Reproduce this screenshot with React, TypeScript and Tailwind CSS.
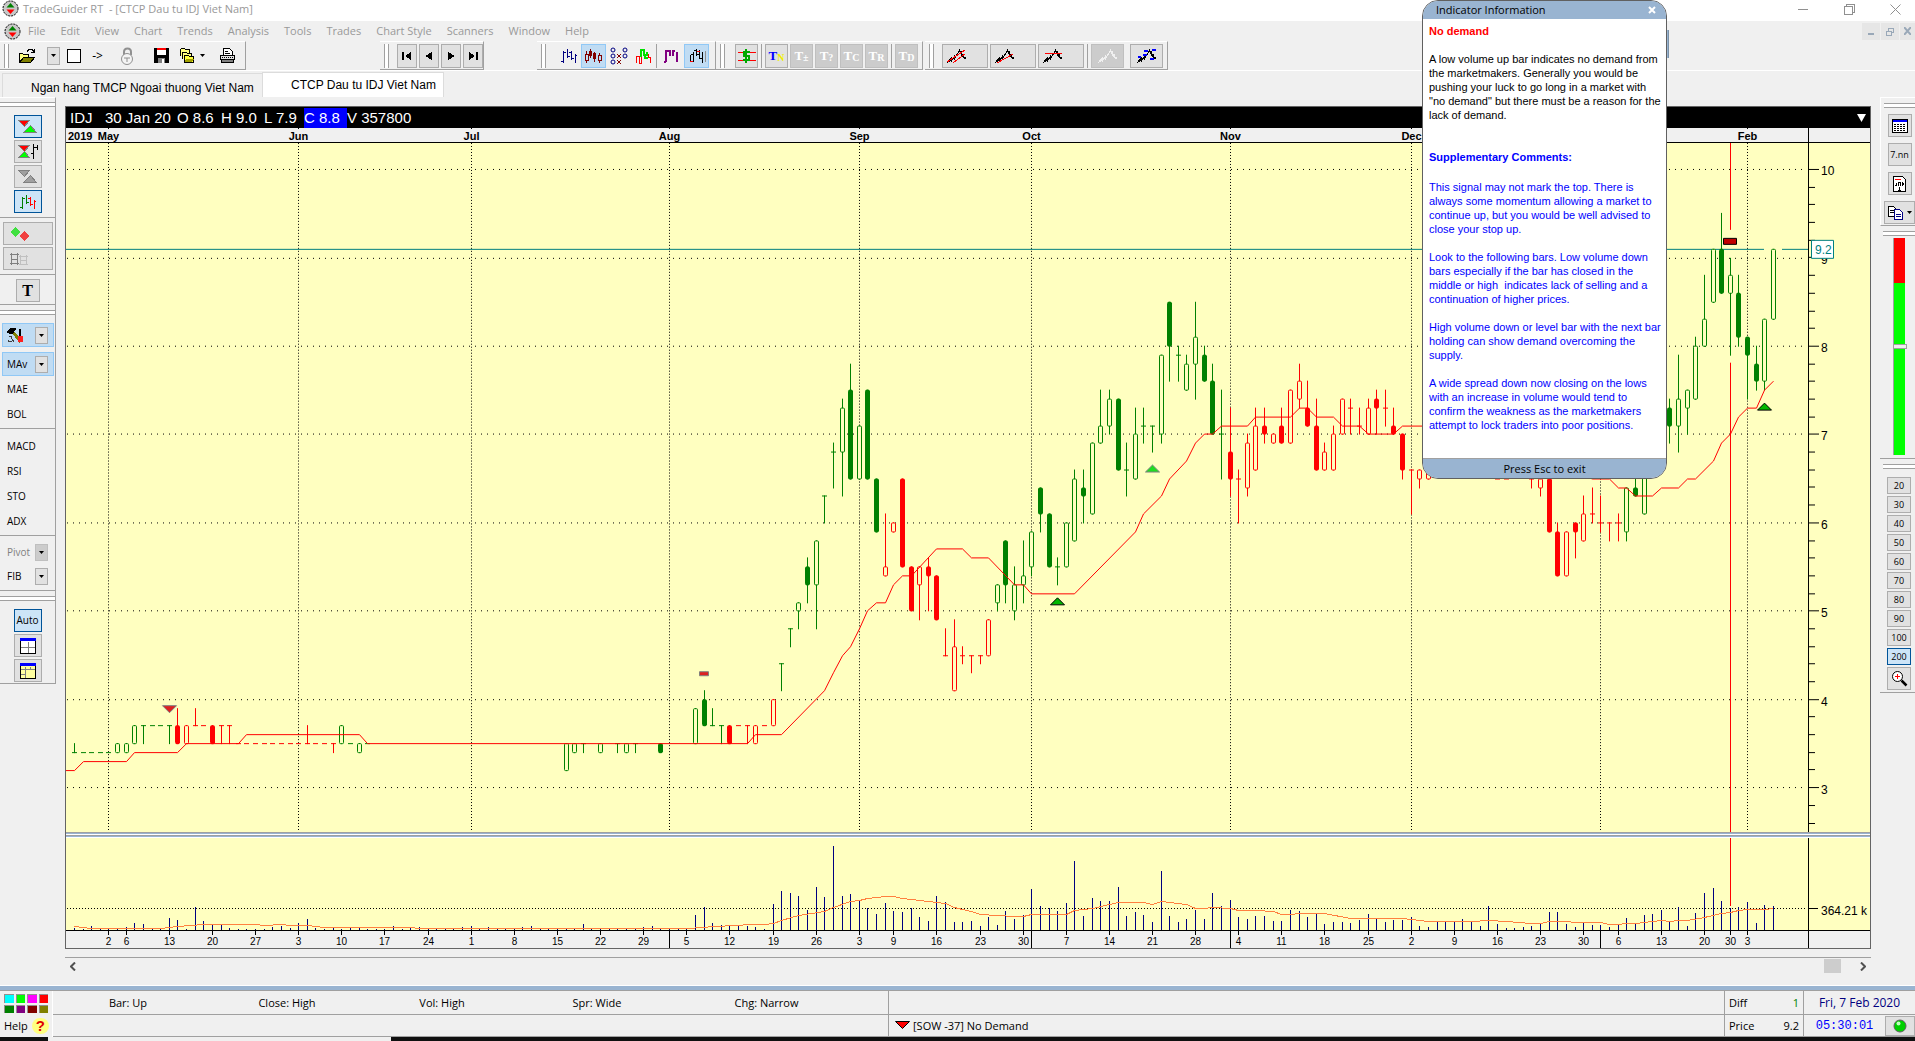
import React from 'react';

type Body = 'hollow' | 'solid' | 'tick';
type Bar = [index: number, tone: 'g' | 'r', body: Body, top: number, bottom: number, high: number, low: number];

const GREEN = '#008000';
const RED = '#ff0000';
const PAPER = '#ffffc0';

// Compact bar notation: index, colour + body (h = hollow, s = solid, t = tick), top, bottom, high, low
const BARS: Bar[] = `
0gt34,34,35,34 1gt34 2gt34 3gt34 4gt34 5gh35,34 6gh35,34 7gh37,35 8gt37,37,37,35 9gt37 10gt37
11gt37,37,37,35 12rs37,35,39,35 13rh37,35 14rt37,37,39,37 15rt37 16rs37,35 17rt37,37,37,35
18rt37,37,37,35 19rt35 20rt35 21rt35 22rt35 23rt35 24rt35 25rt35 26rt35 27rt35,35,37,35 28rt35 29rt35
30rt35,35,35,34 31gh37,35 32gt35 33gh35,34 34gt35 57gh35,32 58gh35,34 59gt35,35,35,34 61gh35,34
63gt35,35,35,34 64gh35,34 65gt35,35,35,34 68gs35,34 72gh39,35 73gs40,37,41,37 74gt37,37,39,37
75gt37,37,37,35 76rs37,35 77rt37 78rt37,37,37,35 79rh37,35 80rt37 81rh40,37 82gt44,44,44,41
83gt48,48,48,46 84gh51,50,51,48 85gs55,53,56,51 86gh58,53,58,48 87gt63,63,63,60 88gt68,68,69,64
89gh73,68,74,63 90gs75,65,78,65 91gh71,65 92gs75,65 93gs65,59 94rh55,54,61,54 95rh60,59 96rs65,55
97rs55,50 98rh55,53,55,49 99rs55,54,56,50 100rs54,49 101rt45,45,48,45 102rh46,41,49,41
103rt45,45,46,44 104rt45,45,45,43 105rt45,45,45,44 106rh49,45 107gh53,51,53,50 108gs58,53,58,51
109gh53,50,55,49 110gh54,53,58,51 111gh59,55,59,54 112gs64,61,64,59 113gs61,55 114gt55,55,56,53
115gh60,55 116gh65,58,66,58 117gs64,63,66,60 118gh69,61 119gh71,69,75,69 120gh74,71,75,70
121gs74,66 122gt66,66,69,63 123gh70,65,73,65 124gt71,71,73,69 125gt71,71,71,68 126gh79,70,79,69
127gs85,80,85,76 128gt79,79,80,76 129gh78,75,79,75 130gh81,78,85,74 131gs79,76,80,76 132gs76,70,78,70
133gt70,70,75,65 134rs68,65,73,63 135rt65,65,66,60 136rh69,64,70,63 137rh71,66,73,66 138rs71,70,73,69
139rh70,69 140rs71,69,73,69 141rh75,69 142rh76,74,78,73 143rs73,71,76,71 144rs71,66,74,66
145rh68,66,69,66 146rh70,66,71,66 147rh74,70 148rt73,73,74,70 149rt71,71,73,70 150rh73,70,74,70
151rs74,73,75,70 152rt73,73,75,71 153rs71,70,73,70 154rs70,66,70,65 155rt66,66,66,61 156rh66,65,66,64
157rh66,65 165rt65 166rt65 169rt65,65,65,64 170rh65,64,65,63 171rs65,59 172rs59,54,60,54 173rh59,54
174rs60,59,60,56 175rh61,58,63,58 176rt61,61,64,60 177rt60,60,63,59 178rt60,60,60,58 179rt60,60,61,58
180gh64,59,64,58 181gs64,63,66,63 182gh67,61 185gs73,71,74,69 186gh74,71,79,68 187gh75,73,75,70
188gh80,74,81,74 189gh83,80,88,80 190gh91,85 191gs91,86,95,86 192gh88,86,90,79 193gs86,81,88,80
194gs81,79,81,74 195gs78,76,80,75 196gh83,76,83,75 197gh91,83`
  .trim()
  .split(/\s+/)
  .map((item) => {
    const [, index, tone, body, rest] = item.match(/^(\d+)([gr])([hst])(.+)$/)!;
    const p = rest.split(',').map((n) => Number(n) / 10);
    const top = p[0];
    const bottom = p[1] ?? top;
    return [
      Number(index),
      tone as 'g' | 'r',
      body === 'h' ? 'hollow' : body === 's' ? 'solid' : 'tick',
      top,
      bottom,
      p[2] ?? top,
      p[3] ?? bottom,
    ];
  });

const MOVING_AVERAGE: [number, number][] = [
  [-1, 3.2], [0, 3.2], [1, 3.3], [6, 3.3], [7, 3.4], [12, 3.4], [13, 3.5], [19, 3.5], [20, 3.6], [33, 3.6],
  [34, 3.5], [78, 3.5], [79, 3.6], [82, 3.6], [87, 4.1], [88, 4.3], [89, 4.5], [90, 4.6], [91, 4.8], [92, 5],
  [93, 5.1], [94, 5.1], [95, 5.3], [96, 5.4], [97, 5.4], [100, 5.7], [103, 5.7], [104, 5.6], [106, 5.6],
  [109, 5.3], [110, 5.3], [111, 5.2], [116, 5.2], [123, 5.9], [124, 6.1], [126, 6.3], [127, 6.5], [129, 6.7],
  [130, 6.9], [131, 7], [132, 7], [133, 7.1], [136, 7.1], [137, 7.2], [141, 7.2], [142, 7.3], [143, 7.3],
  [144, 7.2], [146, 7.2], [147, 7.1], [149, 7.1], [150, 7], [153, 7], [154, 7.1], [158, 7.1], [170, 6.7],
  [176, 6.5], [178, 6.5], [179, 6.4], [180, 6.4], [181, 6.3], [183, 6.3], [184, 6.4], [186, 6.4], [187, 6.5],
  [188, 6.5], [190, 6.7], [191, 6.9], [192, 7], [193, 7.2], [194, 7.3], [195, 7.3], [196, 7.5], [197, 7.6],
];

const VOLUME = [
  2, 1, 4, 1, 1, 2, 3, 7, 6, 2, 1, 12, 10, 1, 23, 9, 6, 6, 2, 1, 1, 1, 1, 3, 4, 2, 7, 11, 2, 1, 2, 1, 2, 2, 1, 1,
  1, 4, 1, 2, 3, 1, 2, 1, 1, 3, 4, 1, 3, 1, 2, 2, 3, 4, 1, 2, 1, 1, 1, 6, 1, 1, 1, 2, 1, 1, 3, 4, 2, 1, 1, 1,
  15, 23, 7, 5, 5, 5, 4, 3, 1, 26, 39, 37, 34, 20, 43, 33, 84, 34, 36, 30, 22, 16, 27, 19, 18, 22, 13, 9, 34,
  28, 8, 8, 9, 4, 13, 5, 19, 11, 15, 41, 24, 22, 19, 27, 69, 14, 32, 29, 29, 43, 14, 18, 15, 8, 59, 14, 8, 11,
  20, 11, 37, 24, 30, 13, 11, 14, 14, 9, 9, 20, 19, 13, 16, 6, 8, 8, 7, 10, 16, 11, 8, 10, 10, 13, 4, 3, 9, 9,
  8, 11, 8, 4, 24, 6, 2, 2, 3, 4, 6, 18, 18, 6, 3, 8, 5, 5, 3, 6, 12, 6, 15, 16, 20, 8, 23, 4, 17, 37, 42, 29,
  22, 23, 28, 7, 25, 24,
];

const VOLUME_AVERAGE: [number, number][] = [
  [0, 4], [2, 2], [10, 2], [12, 4], [15, 6], [21, 6], [22, 5], [24, 6], [25, 5], [27, 5], [29, 3], [39, 3],
  [40, 2], [71, 2], [73, 3], [74, 4], [77, 5], [78, 6], [80, 6], [81, 7], [82, 10], [84, 15], [87, 19],
  [88, 23], [90, 29], [91, 30], [92, 32], [94, 34], [95, 34], [96, 32], [99, 29], [101, 27], [102, 23],
  [103, 21], [104, 19], [105, 16], [107, 15], [109, 14], [110, 14], [111, 16], [115, 16], [116, 20],
  [118, 22], [120, 26], [121, 28], [124, 28], [125, 26], [126, 29], [129, 26], [130, 22], [131, 22],
  [132, 23], [134, 22], [135, 20], [137, 20], [139, 19], [140, 16], [141, 16], [142, 17], [145, 17],
  [148, 12], [154, 12], [155, 11], [157, 9], [162, 9], [164, 10], [166, 9], [169, 7], [170, 7], [171, 9],
  [173, 9], [174, 8], [177, 8], [178, 6], [179, 6], [180, 7], [181, 7], [184, 10], [185, 9], [186, 10],
  [187, 10], [189, 13], [191, 17], [192, 18], [193, 20], [194, 21], [196, 21], [197, 22],
];

const MONTHS: [number, string][] = [
  [4, 'May'], [26, 'Jun'], [46, 'Jul'], [69, 'Aug'], [91, 'Sep'], [111, 'Oct'], [134, 'Nov'], [155, 'Dec'],
  [177, ''], [194, 'Feb'],
];

const DAYS: [number, string][] = [
  [4, '2'], [6, '6'], [11, '13'], [16, '20'], [21, '27'], [26, '3'], [31, '10'], [36, '17'], [41, '24'],
  [46, '1'], [51, '8'], [56, '15'], [61, '22'], [66, '29'], [71, '5'], [76, '12'], [81, '19'], [86, '26'],
  [91, '3'], [95, '9'], [100, '16'], [105, '23'], [110, '30'], [115, '7'], [120, '14'], [125, '21'],
  [130, '28'], [135, '4'], [140, '11'], [145, '18'], [150, '25'], [155, '2'], [160, '9'], [165, '16'],
  [170, '23'], [175, '30'], [179, '6'], [184, '13'], [189, '20'], [192, '30'], [194, '3'],
];

const px = (i: number) => Math.round(8 + 8.624 * i) + 0.5;
const py = (price: number) => Math.floor(203.5 + (8 - price) * 88.45) + 0.5;

const Candle: React.FC<{ bar: Bar }> = ({ bar }) => {
  const [i, tone, body, top, bottom, high, low] = bar;
  const x = px(i);
  const color = tone === 'g' ? GREEN : RED;
  return (
    <g stroke={color} fill={body === 'solid' ? color : PAPER}>
      {high !== low && <path d={`M${x} ${py(high) - 0.5}V${py(low) + 0.5}`} />}
      {body === 'tick' ? (
        <path d={`M${x - 2.5} ${py(top)}h5`} />
      ) : (
        <rect x={x - 2} y={py(top)} width="4" height={py(bottom) - py(top)} rx="1" />
      )}
    </g>
  );
};

const MonthHeader: React.FC = () => (
  <svg
    viewBox="0 0 1804 15"
    preserveAspectRatio="none"
    className="block h-[15px] w-full bg-[#f0f0f0] font-['Liberation_Sans',sans-serif] text-[11px] font-bold"
  >
    <text x="2" y="12">2019</text>
    {MONTHS.map(([i, name]) => (
      <g key={i}>
        <text x={px(i)} y="12" textAnchor="middle">{name}</text>
        <path d={`M${px(i)} 0v1`} stroke="#000" />
      </g>
    ))}
    <path d="M0 14.5H1804M1742.5 0V15" stroke="#000" shapeRendering="crispEdges" />
  </svg>
);

const PriceChart: React.FC = () => (
  <svg
    viewBox="0 0 1804 690"
    preserveAspectRatio="none"
    className="block min-h-0 w-full flex-1 bg-[#ffffc0] font-['Liberation_Sans',sans-serif] text-[12px]"
  >
    <g shapeRendering="crispEdges" fill="none">
      {[10, 9, 8, 7, 6, 5, 4, 3].map((p) => (
        <path key={p} d={`M1 ${py(p)}H1738`} stroke="#000" strokeDasharray="1 5" />
      ))}
      {MONTHS.map(([i]) => (
        <path key={i} d={`M${px(i)} 0V690`} stroke="#000" strokeDasharray="1 2" />
      ))}
      <path d={`M0 ${py(9.1)}H1698M1716 ${py(9.1)}H1742`} stroke="#008080" />
      <path d="M1664.5 0V87M1664.5 220V690" stroke={RED} />
      {BARS.map((bar) => (
        <Candle key={bar[0]} bar={bar} />
      ))}
      <polyline points={MOVING_AVERAGE.map(([i, p]) => `${px(i)},${py(p)}`).join(' ')} stroke={RED} />
      <path d="M1742.5 0V690" stroke="#000" />
      {Array.from({ length: 39 }, (_, k) => 10 - k * 0.2).map((p, k) => (
        <path key={k} d={`M1743 ${py(p + 0.001)}h${k % 5 === 0 ? 10 : 6}`} stroke="#000" />
      ))}
    </g>
    {/* Signal markers */}
    <path d="M96.5 563.5h14l-7 7z" fill="#dd2020" stroke="#808080" />
    <path d="M633.5 529.5h9v4h-9z" fill="#dd2020" stroke="#808080" />
    <path d="M984.5 462.5h14l-7-7z" fill="#00b800" stroke="#000" />
    <path d="M1079.5 329.5h14l-7-7z" fill="#20dd20" stroke="#808080" />
    <path d="M1657.5 95.5h13v6h-13z" fill="#c00000" stroke="#000" />
    <path d="M1691.5 267.5h14l-7-7z" fill="#00b800" stroke="#000" />
    {[10, 9, 8, 7, 6, 5, 4, 3].map((p) => (
      <text key={p} x="1755" y={py(p) + 6}>{p}</text>
    ))}
    <path d="M1745.5 97.5h22v18h-22z" fill="#fff" stroke="#008080" />
    <text x="1749" y="111" fill="#008080">9.2</text>
  </svg>
);

const VolumeChart: React.FC = () => (
  <svg
    viewBox="0 0 1804 110"
    preserveAspectRatio="none"
    className="block h-[110px] w-full bg-[#f0f0f0] font-['Liberation_Sans',sans-serif] text-[10px]"
  >
    <path d="M0 0H1804V92H0z" fill={PAPER} />
    <g shapeRendering="crispEdges" fill="none">
      <path d="M1 70.5H1740" stroke="#000" strokeDasharray="1 2" />
      {VOLUME.map((v, i) => (
        <path key={i} d={`M${px(i)} ${92 - v}V92`} stroke="#000080" />
      ))}
      <polyline points={VOLUME_AVERAGE.map(([i, v]) => `${px(i)},${92.5 - v}`).join(' ')} stroke="#ff8040" />
      <path d="M1664.5 0V68" stroke={RED} />
      <path d="M0 92.5H1804M1742.5 0V110M1743 70.5h9" stroke="#000" />
      {DAYS.map(([i]) => (
        <path key={i} d={`M${px(i)} 93v4`} stroke="#000" />
      ))}
      {[69, 111, 134, 177].map((i) => (
        <path key={i} d={`M${px(i)} 93v17`} stroke="#000" />
      ))}
    </g>
    {DAYS.map(([i, label]) => (
      <text key={i} x={px(i)} y="107" textAnchor="middle">{label}</text>
    ))}
    <text x="1755" y="77" className="text-[12px]">364.21 k</text>
  </svg>
);

/* ---------- small drawings ---------- */

const Pic: React.FC<{ w?: number; h?: number; children: React.ReactNode }> = ({ w = 18, h = 18, children }) => (
  <svg width={w} height={h} viewBox={`0 0 ${w} ${h}`} fill="none" stroke="#000" shapeRendering="crispEdges" className="shrink-0">
    {children}
  </svg>
);

const AppMark: React.FC = () => (
  <svg width="17" height="17" viewBox="0 0 17 17" className="shrink-0">
    <circle cx="8.5" cy="8.5" r="7.5" fill="#c8c8c8" stroke="#000" strokeDasharray="2 1" />
    <path d="M8.5 3l4 4.5h-8z" fill="#008000" />
    <path d="M8.5 14l4-4.5h-8z" fill="#ff0000" />
  </svg>
);

const Caret: React.FC = () => (
  <svg width="5" height="3" viewBox="0 0 5 3" className="shrink-0"><path d="M0 0h5L2.5 3z" /></svg>
);

const OpenPic = () => (
  <Pic w={18} h={16}>
    <path d="M1.5 14V5.5h3l1 1h5v3" fill="#ffff80" />
    <path d="M1.5 14.5l4-5h11l-4 5z" fill="#808000" />
    <path d="M9 3.5l2-2h3l2 2M16.5 1v4M13 4.5h3" />
  </Pic>
);
const LockPic = () => (
  <svg width="14" height="18" viewBox="0 0 14 18" fill="none" stroke="#909090">
    <path d="M4 8V5q0-3.500 3.500-3.500T11 5v3" strokeWidth="2" />
    <circle cx="7" cy="12" r="5.5" fill="#f4f4f4" />
    <path d="M4 11h6M7 11v4" />
  </svg>
);
const SavePic = () => (
  <Pic w={15} h={15}>
    <path d="M0 0h14l1 1v14H0z" fill="#000" stroke="none" />
    <path d="M3 1h9v6H3z" fill="#fff" stroke="none" />
    <path d="M3 0h9v2H3z" fill="#ff0000" stroke="none" />
    <path d="M4 10h7v5H4z" fill="#808080" stroke="none" />
    <path d="M8 11h2v4H8z" fill="#fff" stroke="none" />
  </Pic>
);
const FoldersPic = () => (
  <Pic w={17} h={17}>
    <path d="M1.5 9V2.5l1-1h3l1 1h4V8" fill="#ffff80" />
    <path d="M3.5 12V5.5h4l1 1h4v4" fill="#ffff80" />
    <path d="M5.5 15.5V8.5h4l1 1h4v6z" fill="#ffff40" />
    <path d="M7 12h8l-2 3H6z" fill="#a0a000" stroke="none" />
  </Pic>
);
const PrintPic = () => (
  <Pic w={17} h={17}>
    <path d="M4.5 8V1.5h6l3 3V8z" fill="#fff" />
    <path d="M6 4.5h3M6 6.5h5" />
    <path d="M1.5 8.5h14v4h-14z" fill="#e0e0e0" />
    <path d="M1 10.5h15" strokeDasharray="1 1" />
    <path d="M2.5 12.5h12v3h-12z" fill="#808080" />
  </Pic>
);
const BarsPic: React.FC<{ a: string; b?: string }> = ({ a, b = a }) => (
  <Pic w={16} h={16}>
    <path d="M2.5 3v12M0 13.5h2M3 4.5h2M6.5 1v9M7 8.5h2" stroke={a} />
    <path d="M10.5 3v9M8 4.5h2M11 10.5h2M14.5 6v9M15 7.5h1" stroke={b} />
  </Pic>
);
const CandlesPic = () => (
  <Pic w={17} h={16}>
    <path d="M1.5 3v3M1.5 12v3M.5 6.5h3v6h-3zM5.5 1v9M9.5 4v10M14.5 5v2M14.5 12v3M13.5 7.5h3v5h-3z" stroke="#800000" />
    <path d="M4 3h3v5H4zM8 5h3v6H8z" fill="#800000" stroke="none" />
  </Pic>
);
const PointFigurePic = () => (
  <svg width="18" height="18" viewBox="0 0 18 18" fill="none">
    <g stroke="#000080">
      <circle cx="3" cy="3" r="2" /><circle cx="3" cy="9" r="2" /><circle cx="3" cy="15" r="2" />
      <circle cx="15" cy="3" r="2" /><circle cx="15" cy="9" r="2" />
    </g>
    <path d="M7 7l4 4m0-4l-4 4M7 13l4 4m0-4l-4 4" stroke="#800000" />
  </svg>
);
const SwingPic = () => (
  <Pic w={18} h={16}>
    <path d="M1.5 15V8.5h3V15h2V9M13.5 6v3.500h2V15" stroke="#ff0000" />
    <path d="M6 9V2h3v5h3V4M10 6v4h3" stroke="#00e000" strokeWidth="2" />
  </Pic>
);
const PurplePic = () => (
  <Pic w={15} h={16}>
    <path d="M2 2v12M6 2v6M9 2v6M13 4v10M2 3h3M9 3h2M0 14h2" stroke="#800080" strokeWidth="2" />
  </Pic>
);
const StepsPic = () => (
  <Pic w={18} h={16}>
    <path d="M2.5 7v7M5.5 4v10M8.5 1v7M11.5 2v9M14.5 4v11M3 6.5h2M6 2.5h2M9 6.5h2M12 10.5h2" />
    <path d="M17.5 3v11" stroke="#909090" />
    <path d="M9 3.5h3M2 13.5h3" stroke="#ff0000" />
  </Pic>
);
const TrendPic: React.FC<{ red?: string; blue?: boolean; tone?: string }> = ({ red, blue, tone = '#000' }) => (
  <Pic w={20} h={16}>
    <path d="M.5 15l2-4v3l2-5v4l3-5v3l5-9 2 5 1 1 3 3" stroke={tone} />
    <path d="M12 3h2v3h2v3h2v2" stroke={tone} />
    {red && <path d={red} stroke="#ff0000" />}
    {blue && <path d="M7 3h4M15 2h4M6 7h4M1 9h3M13 11h4" stroke="#0000ff" strokeWidth="2" />}
  </Pic>
);

const SignalsPic: React.FC<{ up: string; down: string; flag?: boolean }> = ({ up, down, flag }) => (
  <Pic w={22} h={15}>
    <path d="M1.5 1.5h11l-5 6z" fill={down} stroke="#808080" />
    <path d={flag ? 'M1.5 13.5h11l-5-6z' : 'M6.5 13.5h13l-6-7z'} fill={up} stroke="#808080" />
    {flag && <path d="M16.5 0v15M17 3.5h3M20.5 1v5M14 9.5h2" />}
  </Pic>
);
const GridPic: React.FC<{ fill: string; uneven?: boolean }> = ({ fill, uneven }) => (
  <Pic w={16} h={16}>
    <path d="M.5 1.5h15v14H.5z" fill={fill} />
    <path d={uneven ? 'M1 6.5h14M5.5 4v11M10.5 4v3M1 11.5h4' : 'M1 9.5h14M8.5 4v11'} stroke="#808080" />
    <path d="M0 1.5h16" stroke="#0000ff" strokeWidth="3" />
  </Pic>
);
const HammerPic = () => (
  <Pic w={18} h={17}>
    <path d="M5 4l9 11" stroke="#808000" strokeWidth="3" />
    <path d="M0 5l4-4h5L5 7z" fill="#000" />
    <path d="M13 2v7" strokeWidth="2" />
    <path d="M11 9h5v6h-5z" fill="#ff2020" stroke="none" />
    <path d="M1.5 9.5h3v2l3 4M1.5 12.5v2h3" stroke="#404040" />
  </Pic>
);

/* ---------- controls ---------- */

const Btn: React.FC<{ label: string; className?: string; children?: React.ReactNode }> = ({
  label,
  className = '',
  children,
}) => (
  <button type="button" aria-label={label} className={`flex shrink-0 items-center ${className}`}>
    {children}
  </button>
);

const raised = 'border border-[#adadad] bg-[#e1e1e1]';
const pressed = 'border border-[#005499] bg-[#cce4f7]';
const glowing = 'border border-[#90c8f6] bg-[#c0dcf3]';
const muted = 'border border-[#bfbfbf] bg-[#cccccc]';

const Band: React.FC<{ className?: string; children: React.ReactNode }> = ({ className = '', children }) => (
  <div className={`flex h-[29px] shrink-0 items-center border-r border-b border-t border-t-white border-[#a0a0a0] ${className}`}>
    <span className="mr-[6px] ml-1 h-6 w-[5px] shrink-0 border-x border-[#a0a0a0] bg-white" />
    {children}
  </div>
);

const Rule = () => <hr className="w-full border-t border-[#a0a0a0]" />;
const SideGrip = () => <div className="h-[5px] w-full shrink-0 border-y border-[#a0a0a0] bg-white" />;

const GlyphBtn: React.FC<{ main: string; sub: string; on?: boolean }> = ({ main, sub, on }) => (
  <button
    type="button"
    className={`flex h-6 w-[23px] shrink-0 items-center justify-center font-['Liberation_Serif',serif] text-[13px] leading-none font-bold ${
      on ? 'border border-[#adadad] bg-[#e1e1e1] text-[#0000ff]' : 'border border-[#bfbfbf] bg-[#cccccc] text-white'
    }`}
  >
    {main}
    <sub className={on ? 'text-[10px] text-[#f0f000]' : 'text-[10px]'}>{sub}</sub>
  </button>
);

const MENUS = ['File', 'Edit', 'View', 'Chart', 'Trends', 'Analysis', 'Tools', 'Trades', 'Chart Style', 'Scanners', 'Window', 'Help'];

const Toolbar: React.FC = () => (
  <div className="flex h-[30px] shrink-0 border-b border-white">
    <Band className="w-[246px]">
      <Btn label="Open" className="w-6 justify-center"><OpenPic /></Btn>
      <Btn label="Open recent" className={`ml-2 h-[18px] w-[13px] justify-center ${raised}`}><Caret /></Btn>
      <Btn label="New" className="w-7 justify-center"><span className="size-[14px] border border-black bg-white" /></Btn>
      <button type="button" className="w-6 text-[12px]">-&gt;</button>
      <Btn label="Lock" className="w-10 justify-center"><LockPic /></Btn>
      <Btn label="Save" className="w-7 justify-center"><SavePic /></Btn>
      <Btn label="Folders" className="w-[34px] justify-center gap-1"><FoldersPic /><Caret /></Btn>
      <Btn label="Print" className="w-9 justify-center"><PrintPic /></Btn>
    </Band>
    <Band className="ml-[134px] w-[104px] gap-[2px]">
      <Btn label="First" className={`h-6 w-5 justify-center ${raised}`}><Pic w={10} h={8}><path d="M1 0v8" strokeWidth="2" /><path d="M9 0v8L3 4z" fill="#000" stroke="none" /></Pic></Btn>
      <Btn label="Previous" className={`h-6 w-5 justify-center ${raised}`}><Pic w={8} h={8}><path d="M7 0v8L0 4z" fill="#000" stroke="none" /></Pic></Btn>
      <Btn label="Next" className={`h-6 w-5 justify-center ${raised}`}><Pic w={8} h={8}><path d="M1 0v8l7-4z" fill="#000" stroke="none" /></Pic></Btn>
      <Btn label="Last" className={`h-6 w-5 justify-center ${raised}`}><Pic w={10} h={8}><path d="M9 0v8" strokeWidth="2" /><path d="M1 0v8l6-4z" fill="#000" stroke="none" /></Pic></Btn>
    </Band>
    <Band className="ml-[53px] w-[179px]">
      <Btn label="Bars" className="ml-1 h-6 w-[25px] justify-center"><BarsPic a="#000080" /></Btn>
      <Btn label="Candles" className={`h-6 w-[25px] justify-center ${glowing}`}><CandlesPic /></Btn>
      <Btn label="Point and figure" className="h-6 w-[25px] justify-center"><PointFigurePic /></Btn>
      <Btn label="Swing" className="h-6 w-[25px] justify-center"><SwingPic /></Btn>
      <span className="mr-[2px] h-6 w-px bg-[#a0a0a0]" />
      <Btn label="Purple bars" className="h-6 w-[25px] justify-center"><PurplePic /></Btn>
      <Btn label="Steps" className={`h-6 w-[25px] justify-center ${glowing}`}><StepsPic /></Btn>
    </Band>
    <Band className="w-[207px] gap-[2px]">
      <Btn label="Price lines" className={`ml-[2px] h-6 w-[23px] justify-center ${raised}`}>
        <Pic w={18} h={16}>
          <path d="M0 4.5h18M0 12.5h18" stroke="#ff0000" />
          <path d="M12 4H6v4h5v4H5M8 1v14" stroke="#00a800" strokeWidth="2" />
        </Pic>
      </Btn>
      <span className="mx-px h-6 w-px bg-[#a0a0a0]" />
      <GlyphBtn main="T" sub="N" on />
      <GlyphBtn main="T" sub="±" />
      <GlyphBtn main="T" sub="?" />
      <GlyphBtn main="T" sub="C" />
      <GlyphBtn main="T" sub="R" />
      <span className="mx-px h-6 w-px bg-[#a0a0a0]" />
      <GlyphBtn main="T" sub="D" />
    </Band>
    <Band className="ml-[2px] w-[243px] gap-[2px]">
      <Btn label="Trend channel" className={`h-6 w-[46px] pl-1 ${raised}`}><TrendPic red="M0 14L18 2M6 15L18 6" /></Btn>
      <Btn label="Trend line" className={`h-6 w-[46px] pl-1 ${raised}`}><TrendPic red="M2 15L18 6" /></Btn>
      <Btn label="Level line" className={`h-6 w-[46px] pl-1 ${raised}`}><TrendPic red="M2 5.5H19" /></Btn>
      <span className="mx-px h-6 w-px bg-[#a0a0a0]" />
      <Btn label="Cluster" className={`h-6 w-[33px] justify-center ${muted}`}><TrendPic tone="#f0f0f0" /></Btn>
      <Btn label="Zones" className={`ml-1 h-6 w-[33px] justify-center ${raised}`}><TrendPic blue /></Btn>
    </Band>
  </div>
);

const IndicatorRow: React.FC<{ name: string; menu?: boolean; on?: boolean; off?: boolean }> = ({ name, menu, on, off }) => (
  <div className={`ml-[2px] flex h-6 w-[52px] items-center justify-between ${on ? glowing : 'border border-transparent'}`}>
    <button type="button" className={`pl-1 text-[10px] ${off ? 'text-[#808080]' : 'text-black'}`}>{name}</button>
    {menu && <Btn label={`${name} options`} className={`mr-[5px] h-[17px] w-[13px] justify-center ${off ? muted : raised}`}><Caret /></Btn>}
  </div>
);

const LeftRail: React.FC = () => (
  <aside className="w-14 shrink-0 font-['Open_Sans',sans-serif]">
    <div className="flex h-[208px] flex-col items-center border-r border-b border-[#a0a0a0] border-t border-t-white pt-1">
      <SideGrip />
      <div className="mt-[8px] flex flex-col gap-[2px]">
        <Btn label="Signals" className={`h-[23px] w-7 justify-center ${pressed}`}><SignalsPic up="#00ff00" down="#ff0000" /></Btn>
        <Btn label="Signals with bars" className={`h-[23px] w-7 justify-center ${raised}`}><SignalsPic up="#00ff00" down="#ff0000" flag /></Btn>
        <Btn label="Hide signals" className={`h-[23px] w-7 justify-center ${raised}`}><SignalsPic up="#a0a0a0" down="#a0a0a0" /></Btn>
        <Btn label="Coloured bars" className={`h-[23px] w-7 justify-center ${pressed}`}><BarsPic a="#008000" b="#ff0000" /></Btn>
      </div>
      <div className="my-1 w-full"><Rule /></div>
      <div className="flex flex-col gap-[2px]">
        <Btn label="Diamonds" className={`h-[23px] w-[50px] pl-[6px] ${raised}`}>
          <Pic w={20} h={14}><path d="M5 0l5 5-5 5-5-5z" fill="#40e040" stroke="none" /><path d="M14 4l5 5-5 5-5-5z" fill="#f04040" stroke="none" /></Pic>
        </Btn>
        <Btn label="Link" className={`h-[23px] w-[50px] pl-[6px] ${raised}`}>
          <Pic w={18} h={12}><path d="M1.5 0v12M7.5 0v12M0 1.5h9M0 10.5h9M2 6.5h5" stroke="#808080" /><path d="M10.5 2v10M16.5 2v10M9 3.5h9M9 11.5h9M11 7.5h5" stroke="#c0c0c0" /></Pic>
        </Btn>
      </div>
      <div className="my-1 w-full"><Rule /></div>
      <button type="button" className={`h-[23px] w-6 font-['Liberation_Serif',serif] text-base leading-5 font-bold ${raised}`}>T</button>
    </div>
    <div className="flex h-[286px] flex-col border-r border-b border-[#a0a0a0] pt-[5px]">
      <SideGrip />
      <div className={`mt-2 ml-[2px] flex h-6 w-[52px] items-center justify-between ${glowing}`}>
        <Btn label="Tools" className="pl-1"><HammerPic /></Btn>
        <Btn label="Tools options" className={`mr-[5px] h-[17px] w-[13px] justify-center ${raised}`}><Caret /></Btn>
      </div>
      <div className="mt-[5px] flex flex-col gap-px">
        <IndicatorRow name="MAv" menu on />
        <IndicatorRow name="MAE" />
        <IndicatorRow name="BOL" />
      </div>
      <div className="mt-[2px] mb-[5px]"><Rule /></div>
      <div className="flex flex-col gap-px">
        <IndicatorRow name="MACD" />
        <IndicatorRow name="RSI" />
        <IndicatorRow name="STO" />
        <IndicatorRow name="ADX" />
      </div>
      <div className="mt-[2px] mb-1"><Rule /></div>
      <IndicatorRow name="Pivot" menu off />
      <IndicatorRow name="FIB" menu />
    </div>
    <div className="flex h-[93px] flex-col items-center gap-[2px] border-r border-b border-[#a0a0a0] pt-[5px]">
      <SideGrip />
      <button type="button" className={`mt-[6px] h-[23px] w-7 text-[10px] ${pressed}`}>Auto</button>
      <Btn label="Grid layout" className={`h-[23px] w-7 justify-center ${raised}`}><GridPic fill="#fff" /></Btn>
      <Btn label="Custom layout" className={`h-[23px] w-7 justify-center ${raised}`}><GridPic fill="#ffffa0" uneven /></Btn>
    </div>
  </aside>
);

const RightRail: React.FC = () => (
  <aside className="w-[35px] shrink-0 font-['Open_Sans',sans-serif]">
    <div className="flex h-[129px] flex-col items-center gap-[6px] border-b border-l border-[#a0a0a0] border-l-white border-t border-t-white pt-[5px] pl-[3px]">
      <SideGrip />
      <Btn label="Calendar" className={`h-[23px] w-6 justify-center ${raised}`}>
        <Pic w={16} h={15}><path d="M.5 1.5h15v13H.5z" fill="#fff" /><path d="M1 3h14" stroke="#0000ff" strokeWidth="2" /><path d="M2 6.5h12M2 8.5h12M2 10.5h12M2 12.5h12" strokeDasharray="2 1" /></Pic>
      </Btn>
      <button type="button" className={`h-[23px] w-6 text-[9px] ${raised}`}>7.nn</button>
      <Btn label="Date" className={`h-[23px] w-6 justify-center ${raised}`}>
        <Pic w={13} h={16}><path d="M.5.5h9l3 3v12H.5z" fill="#fff" /><path d="M2 3.5h6" stroke="#ff0000" /><path d="M2 9.5h1.500v-3M5.500 10V6.500h2V10M9.500 10V6.500l2 3M6.500 11v3M5 14.500h3" /></Pic>
      </Btn>
      <Btn label="Copy" className={`h-[23px] w-full justify-center gap-1 ${raised}`}>
        <Pic w={15} h={14}><path d="M.5.5h5l2 2v8h-7z" fill="#fff" /><path d="M2 4.5h4M2 6.5h4" /><path d="M6.5 3.5h5l3 3v7h-8z" fill="#fff" stroke="#000080" /><path d="M8 8.5h5M8 10.5h5" stroke="#000080" /></Pic>
        <Caret />
      </Btn>
    </div>
    <div className="flex h-[233px] flex-col items-center border-b border-[#a0a0a0] pt-[5px] pl-[3px]">
      <SideGrip />
      <input
        type="range"
        aria-label="Level"
        defaultValue={50}
        className="mt-[2px] h-[217px] w-3 appearance-none border-l border-[#a0a0a0] bg-[linear-gradient(#ff0000_0_45px,#00ff00_45px)] [writing-mode:vertical-lr] [&::-webkit-slider-thumb]:h-[5px] [&::-webkit-slider-thumb]:w-[14px] [&::-webkit-slider-thumb]:appearance-none [&::-webkit-slider-thumb]:border [&::-webkit-slider-thumb]:border-[#a0a0a0] [&::-webkit-slider-thumb]:bg-[#f0f0f0]"
      />
    </div>
    <div className="flex h-[234px] flex-col items-center gap-[2px] border-b border-[#a0a0a0] pt-[5px] pl-[3px]">
      <SideGrip />
      <div className="h-1" />
      {['20', '30', '40', '50', '60', '70', '80', '90', '100'].map((n) => (
        <button key={n} type="button" className={`h-[17px] w-6 shrink-0 text-[9px] leading-[15px] ${raised}`}>{n}</button>
      ))}
      <button type="button" className={`h-[17px] w-6 shrink-0 text-[9px] leading-[15px] ${pressed}`}>200</button>
      <Btn label="Zoom" className={`h-[23px] w-6 justify-center ${raised}`}>
        <svg width="17" height="17" viewBox="0 0 17 17" fill="none" stroke="#000">
          <circle cx="6.5" cy="6.5" r="5" fill="#fff" />
          <path d="M6.5 4v5M4 6.5h5" stroke="#ff0000" />
          <path d="M10.5 10.5l5 5" strokeWidth="2.5" />
        </svg>
      </Btn>
    </div>
  </aside>
);

const ChartPanel: React.FC = () => (
  <main className="mt-[9px] mr-[9px] ml-[9px] flex min-w-0 flex-1 flex-col">
    <section className="flex min-h-0 flex-1 flex-col border border-[#646464]">
      <header className="flex h-[21px] shrink-0 items-center bg-black pl-[4px] font-['Liberation_Sans',sans-serif] text-[15px] leading-5 whitespace-pre text-white">
        <span className="w-[35px]">IDJ</span>
        <span className="w-[72px]">30 Jan 20</span>
        <span className="w-[44px]">O 8.6</span>
        <span className="w-[43px]">H 9.0</span>
        <span className="w-[40px]">L 7.9</span>
        <span className="w-[43px] bg-[#0000ff]">C 8.8</span>
        <span>V 357800</span>
        <Btn label="Chart menu" className="mr-1 ml-auto">
          <svg width="9" height="8" viewBox="0 0 9 8"><path d="M0 0h9L4.5 8z" fill="#fff" /></svg>
        </Btn>
      </header>
      <MonthHeader />
      <PriceChart />
      <div className="h-[6px] shrink-0 border-y border-t-[#a0a0a0] border-b-white bg-[linear-gradient(#99b4d1_0_1px,#fff_1px_2px,#a0a0a0_2px_3px,#99b4d1_3px)]" />
      <VolumeChart />
    </section>
    <div className="mt-2 flex h-[28px] shrink-0 items-start border-t border-[#a0a0a0] pt-px">
      <Btn label="Scroll left" className="h-[14px] w-4 justify-center">
        <svg width="6" height="9" viewBox="0 0 6 9" fill="none" stroke="#505050" strokeWidth="2"><path d="M5 .5L1 4.5l4 4" /></svg>
      </Btn>
      <div className="flex h-[14px] flex-1 justify-end"><span className="mr-[14px] w-[17px] bg-[#cdcdcd]" /></div>
      <Btn label="Scroll right" className="h-[14px] w-4 justify-center">
        <svg width="6" height="9" viewBox="0 0 6 9" fill="none" stroke="#505050" strokeWidth="2"><path d="M1 .5l4 4-4 4" /></svg>
      </Btn>
    </div>
  </main>
);

const PALETTE = ['bg-[#00ffff]', 'bg-[#00ff00]', 'bg-[#ff00ff]', 'bg-[#ff0000]', 'bg-[#008000]', 'bg-[#800080]', 'bg-[#800000]', 'bg-[#808000]'];

const cell = 'flex items-center border-[#a0a0a0]';

const StatusBar: React.FC = () => (
  <footer className="shrink-0 font-['Open_Sans',sans-serif] text-[11px] leading-4">
    <div className="h-[6px] border-y border-t-white border-b-[#a0a0a0] bg-[#99b4d1]" />
    <div className="flex">
      <div className="flex w-[53px] shrink-0 flex-col border-r border-white">
        <div className="grid h-6 grid-cols-4 gap-[2px] px-1 pt-[3px] pb-[2px]">
          {PALETTE.map((color) => (
            <span key={color} className={`border-t border-l border-[#909090] ${color}`} />
          ))}
        </div>
        <button type="button" className="flex h-[22px] items-center gap-1 pl-1">
          Help
          <span className="rounded-full bg-[#ffff80] px-1 font-['Liberation_Sans',sans-serif] text-[15px] font-bold text-[#e00000]">?</span>
        </button>
      </div>
      <div className="min-w-0 flex-1">
        <div className="flex h-6 border-b border-[#a0a0a0]">
          <span className={`${cell} w-[150px] justify-center`}>Bar: Up</span>
          <span className={`${cell} w-[168px] justify-center`}>Close: High</span>
          <span className={`${cell} w-[142px] justify-center`}>Vol: High</span>
          <span className={`${cell} w-[168px] justify-center`}>Spr: Wide</span>
          <span className={`${cell} w-[208px] justify-center border-r pr-[36px]`}>Chg: Narrow</span>
        </div>
        <div className="flex h-[22px] border-b border-[#a0a0a0]">
          <span className={`${cell} w-[836px] border-r`} />
          <span className={`${cell} gap-[3px] pl-[6px]`}>
            <svg width="15" height="9" viewBox="0 0 15 9"><path d="M.5.5h14l-7 7z" fill="#ff0000" stroke="#000" /></svg>
            [SOW -37] No Demand
          </span>
        </div>
      </div>
      <div className="w-[80px] shrink-0">
        <div className={`${cell} h-6 justify-between border-x border-b px-1`}>Diff<span className="text-[#008000]">1</span></div>
        <div className={`${cell} h-[22px] justify-between border-x border-b px-1`}>Price<span>9.2</span></div>
      </div>
      <div className="w-[111px] shrink-0">
        <div className={`${cell} h-6 justify-center border-b text-[12px] text-[#000080]`}>Fri, 7 Feb 2020</div>
        <div className={`${cell} h-[22px] border-b text-[#0000ff]`}>
          <span className="flex-1 text-center font-['Liberation_Mono',monospace] text-[12px]">05:30:01</span>
          <Btn label="Connection" className={`h-5 w-[30px] justify-center ${raised}`}>
            <svg width="14" height="14" viewBox="0 0 14 14">
              <circle cx="7" cy="7" r="6" fill="#00d000" stroke="#606060" />
              <circle cx="5.5" cy="4.5" r="2" fill="#c0ffc0" />
            </svg>
          </Btn>
        </div>
      </div>
    </div>
    <div className="flex h-1 bg-[#101010]"><span className="ml-12 w-[343px] bg-[#f0f0f0]" /></div>
  </footer>
);

const IndicatorDialog: React.FC = () => (
  <div
    role="dialog"
    aria-label="Indicator Information"
    className="absolute top-0 right-[248px] w-[245px] overflow-hidden rounded-2xl border border-[#606060] bg-white font-['Liberation_Sans',sans-serif]"
  >
    <div className="flex h-[18px] items-center justify-between bg-[#99b4d1] pr-[10px] pl-[13px] font-['Open_Sans',sans-serif] text-[11px]">
      Indicator Information
      <Btn label="Close">
        <svg width="8" height="8" viewBox="0 0 8 8" stroke="#fff" strokeWidth="2"><path d="M1 1l6 6M7 1L1 7" /></svg>
      </Btn>
    </div>
    <div className="h-[439px] pt-[5px] pl-[6px] text-[11px] leading-[14px] whitespace-pre text-[#0000ff]">
      <h2 className="font-bold text-[#ff0000]">No demand</h2>
      <p className="mt-[14px] text-black">
        {'A low volume up bar indicates no demand from\nthe marketmakers. Generally you would be\npushing your luck to go long in a market with\n"no demand" but there must be a reason for the\nlack of demand.'}
      </p>
      <h3 className="mt-7 font-bold">Supplementary Comments:</h3>
      <p className="mt-4">
        {'This signal may not mark the top. There is\nalways some momentum allowing a market to\ncontinue up, but you would be well advised to\nclose your stop up.'}
      </p>
      <p className="mt-[14px]">
        {'Look to the following bars. Low volume down\nbars especially if the bar has closed in the\nmiddle or high  indicates lack of selling and a\ncontinuation of higher prices.'}
      </p>
      <p className="mt-[14px]">
        {'High volume down or level bar with the next bar\nholding can show demand overcoming the\nsupply.'}
      </p>
      <p className="mt-[14px]">
        {'A wide spread down now closing on the lows\nwith an increase in volume would tend to\nconfirm the weakness as the marketmakers\nattempt to lock traders into poor positions.'}
      </p>
    </div>
    <div className="h-5 border-t border-[#a0a0a0] bg-[#99b4d1] text-center font-['Open_Sans',sans-serif] text-[11px] leading-[19px]">
      Press Esc to exit
    </div>
  </div>
);

const App: React.FC = () => (
  <div className="relative flex h-screen flex-col overflow-hidden bg-[#f0f0f0] text-black">
    <div className="flex h-[21px] shrink-0 items-start bg-white pl-[2px] font-['Open_Sans',sans-serif] text-[11px] leading-[18px] text-[#999999]">
      <AppMark />
      <h1 className="ml-1 whitespace-pre">TradeGuider RT  - [CTCP Dau tu IDJ Viet Nam]</h1>
      <div className="mr-[14px] ml-auto flex h-[18px] items-center gap-[35px]">
        <Btn label="Minimize"><Pic w={11} h={11}><path d="M0 5.5h10" stroke="#909090" /></Pic></Btn>
        <Btn label="Restore"><Pic w={11} h={11}><path d="M.5 2.5h8v8h-8zM2.5 2V.5h8v8H9" stroke="#909090" /></Pic></Btn>
        <Btn label="Close window"><svg width="11" height="11" viewBox="0 0 11 11" stroke="#909090"><path d="M.5.5l10 10M10.5.5l-10 10" /></svg></Btn>
      </div>
    </div>
    <nav className="flex h-5 shrink-0 items-center gap-[15px] pl-1 font-['Open_Sans',sans-serif] text-[11px] leading-4 text-[#999999]">
      <div className="flex items-center gap-[7px]">
        <AppMark />
        <button type="button">File</button>
      </div>
      {MENUS.slice(1).map((name) => (
        <button key={name} type="button">{name}</button>
      ))}
      <div className="ml-auto flex gap-px">
        <Btn label="Minimize chart" className="h-[17px] w-[18px] justify-center bg-[#e6e6e6]"><Pic w={8} h={8}><path d="M1 7h6" stroke="#99a8b8" strokeWidth="2" /></Pic></Btn>
        <Btn label="Restore chart" className="h-[17px] w-[18px] justify-center bg-[#e6e6e6]"><Pic w={9} h={9}><path d="M.5 4.5h5v4h-5zM2.5 4V1.5h5v4H6M2 1h6" stroke="#99a8b8" /></Pic></Btn>
        <Btn label="Close chart" className="h-[17px] w-[15px] justify-center bg-[#e6e6e6]"><svg width="7" height="8" viewBox="0 0 7 8" stroke="#99a8b8" strokeWidth="2"><path d="M0 0l7 8M7 0L0 8" /></svg></Btn>
      </div>
    </nav>
    <Toolbar />
    <div className="flex h-[26px] shrink-0 items-end pl-[2px] font-['Liberation_Sans',sans-serif] text-[12px] whitespace-nowrap">
      <button type="button" className="h-6 w-[260px] border-t border-l border-[#dcdcdc] pt-1 pl-7 text-left">Ngan hang TMCP Ngoai thuong Viet Nam</button>
      <button type="button" className="h-[25px] w-[182px] border border-b-0 border-[#dcdcdc] bg-white pb-px pl-7 text-left">CTCP Dau tu IDJ Viet Nam</button>
    </div>
    <div className="flex min-h-0 flex-1">
      <LeftRail />
      <ChartPanel />
      <RightRail />
    </div>
    <StatusBar />
    <div className="absolute top-[30px] right-[246px] h-7 w-[6px] border-r border-[#7890a8] bg-[#99b4d1]" />
    <IndicatorDialog />
  </div>
);

export default App;
